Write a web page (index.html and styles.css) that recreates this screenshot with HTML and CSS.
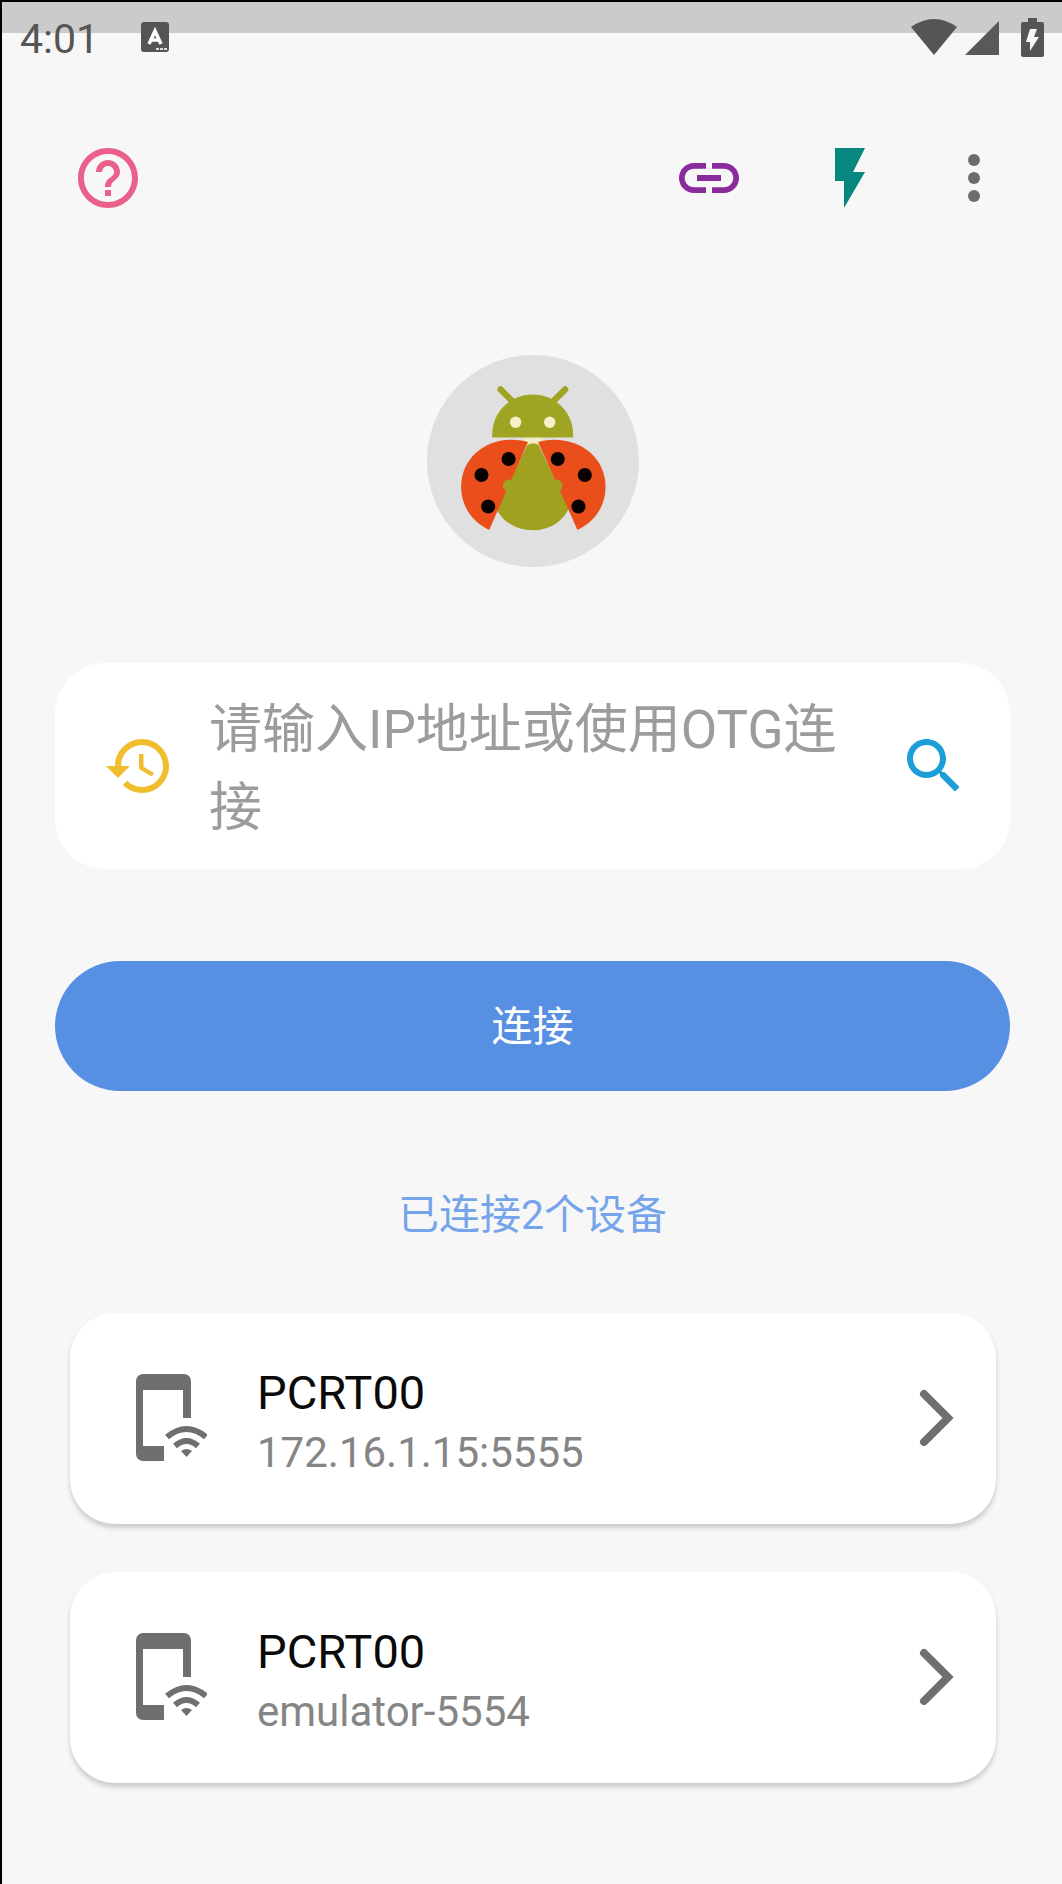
FILE: index.html
```html
<!DOCTYPE html>
<html lang="zh-CN">
<head>
<meta charset="utf-8">
<meta name="viewport" content="width=device-width, initial-scale=1">
<title>已连接2个设备</title>
<link rel="stylesheet" href="styles.css">
</head>
<body>
<svg class="sprite" aria-hidden="true">
  <symbol id="phone-wifi" viewBox="0 0 72 88">
    <path fill="currentColor" d="M29 87H8a7 7 0 0 1-7-7V7a7 7 0 0 1 7-7h41a7 7 0 0 1 7 7v37h-8V16H8v56h21z"/>
    <path fill="none" stroke="currentColor" stroke-width="6" d="M32 63q19.500-16 39 0M40 72q11.500-10 23 0"/>
    <path fill="currentColor" d="M46 77q5.500-4 11 0l-5.500 6z"/>
  </symbol>
  <symbol id="chevron" viewBox="0 0 36 60">
    <path fill="none" stroke="currentColor" stroke-width="8" stroke-linecap="round" d="M6 6l24 24L6 54"/>
  </symbol>
</svg>

<header class="status-bar">
  <time class="clock">4:01</time>
  <svg class="badge" viewBox="0 0 28 30" aria-hidden="true">
    <rect width="28" height="30" rx="3" fill="#555"/>
    <path d="M8 22l6-13 6 13M10.500 18h7" fill="none" stroke="#fff" stroke-width="3.500"/>
    <path d="M15 27h11" stroke="#ddd" stroke-width="2" stroke-dasharray="3 1"/>
  </svg>
  <svg class="wifi" viewBox="0 0 46 36" aria-hidden="true"><path fill="#555" d="M0 8Q23-8 46 8L23 36z"/></svg>
  <svg class="signal" viewBox="0 0 34 34" aria-hidden="true"><path fill="#595959" d="M34 0v34H0z"/></svg>
  <svg class="battery" viewBox="0 0 23 39" aria-hidden="true">
    <path fill="#555" d="M7 0h9v4h5q2 0 2 2v31q0 2-2 2H2q-2 0-2-2V6q0-2 2-2h5z"/>
    <path fill="#f7f7f7" d="M9 11h7l-3 8h5L9 33v-9H5z"/>
  </svg>
</header>

<main class="page">
  <nav class="toolbar">
    <button class="icon-button help" type="button" aria-label="帮助">
      <svg viewBox="0 0 24 24"><path d="M11 18h2v-2h-2v2zm1-16C6.480 2 2 6.480 2 12s4.480 10 10 10 10-4.480 10-10S17.520 2 12 2zm0 18c-4.410 0-8-3.590-8-8s3.590-8 8-8 8 3.590 8 8-3.590 8-8 8zm0-14c-2.210 0-4 1.790-4 4h2c0-1.100.9-2 2-2s2 .9 2 2c0 2-3 1.750-3 5h2c0-2.250 3-2.500 3-5 0-2.210-1.790-4-4-4z"/></svg>
    </button>
    <button class="icon-button link" type="button" aria-label="链接">
      <svg viewBox="0 0 24 24"><path d="M3.900 12c0-1.710 1.390-3.100 3.100-3.100h4V7H7c-2.760 0-5 2.240-5 5s2.240 5 5 5h4v-1.900H7c-1.710 0-3.100-1.390-3.100-3.100zM8 13h8v-2H8v2zm9-6h-4v1.900h4c1.710 0 3.100 1.390 3.100 3.100s-1.390 3.100-3.100 3.100h-4V17h4c2.760 0 5-2.240 5-5s-2.240-5-5-5z"/></svg>
    </button>
    <button class="icon-button flash" type="button" aria-label="快捷">
      <svg viewBox="0 0 24 24"><path d="M7 2v11h3v9l7-12h-4l4-8z"/></svg>
    </button>
    <button class="icon-button more" type="button" aria-label="更多">
      <svg viewBox="0 0 24 24"><circle cx="12" cy="6" r="2"/><circle cx="12" cy="12" r="2"/><circle cx="12" cy="18" r="2"/></svg>
    </button>
  </nav>

  <svg class="logo" viewBox="52 45 634 634" aria-hidden="true">
    <circle cx="369" cy="362" r="317" fill="#e0e0e0"/>
    <path d="M340 290h58l-8 30h-44z" fill="#f1edc4"/>
    <path d="M272 148l36 36M465 148l-36 36" stroke="#9fa522" stroke-width="19" stroke-linecap="round"/>
    <path d="M247 292v-10c0-66 54-119 121-119s121 53 121 119v10z" fill="#9fa522"/>
    <circle cx="317" cy="246" r="17" fill="#f4f0c8"/>
    <circle cx="419" cy="246" r="17" fill="#f4f0c8"/>
    <path d="M352 314q17-8 34 0l90 190c-20 42-60 65-107 65s-90-23-110-65z" fill="#9fa11f"/>
    <path d="M354 305C250 278 154 340 154 440c0 58 34 105 84 128z" fill="#e94e1b"/>
    <path d="M384 305c104-27 202 35 202 135 0 58-34 105-84 128z" fill="#e94e1b"/>
    <circle cx="298" cy="436" r="19" fill="#9fa11f"/>
    <circle cx="438" cy="436" r="19" fill="#9fa11f"/>
    <g fill="#080300">
      <circle cx="296" cy="356" r="21"/><circle cx="215" cy="404" r="21"/><circle cx="235" cy="498" r="21"/>
      <circle cx="443" cy="356" r="21"/><circle cx="524" cy="404" r="21"/><circle cx="505" cy="498" r="21"/>
    </g>
  </svg>

  <form class="connect-form">
    <div class="address">
      <button class="icon-button history" type="button" aria-label="历史">
        <svg viewBox="0 0 24 24"><path d="M13 3c-4.970 0-9 4.030-9 9H1l3.890 3.890.07.14L9 12H6c0-3.870 3.130-7 7-7s7 3.130 7 7-3.130 7-7 7c-1.930 0-3.680-.79-4.940-2.060l-1.420 1.420C8.270 19.990 10.510 21 13 21c4.970 0 9-4.030 9-9s-4.030-9-9-9zm-1 5v5l4.280 2.540.72-1.210-3.500-2.080V8H12z"/></svg>
      </button>
      <textarea class="address-input" rows="2" aria-label="IP地址" placeholder="请输入IP地址或使用OTG连接"></textarea>
      <button class="icon-button search" type="button" aria-label="搜索">
        <svg viewBox="0 0 24 24"><path d="M15.500 14h-.79l-.28-.27C15.410 12.590 16 11.110 16 9.500 16 5.910 13.090 3 9.500 3S3 5.910 3 9.500 5.910 16 9.500 16c1.610 0 3.090-.59 4.230-1.570l.27.28v.79l5 4.990L20.490 19l-4.990-5zm-6 0C7.010 14 5 11.990 5 9.500S7.010 5 9.500 5 14 7.010 14 9.500 11.990 14 9.500 14z"/></svg>
      </button>
    </div>
    <button class="connect" type="button">连接</button>
  </form>

  <p class="summary">已连接2个设备</p>

  <div class="devices">
    <a class="device" href="#device-1">
      <svg class="device-icon" aria-hidden="true"><use href="#phone-wifi"/></svg>
      <span class="device-text">
        <span class="device-name">PCRT00</span>
        <span class="device-address">172.16.1.15:5555</span>
      </span>
      <svg class="device-chevron" aria-hidden="true"><use href="#chevron"/></svg>
    </a>
    <a class="device" href="#device-2">
      <svg class="device-icon" aria-hidden="true"><use href="#phone-wifi"/></svg>
      <span class="device-text">
        <span class="device-name">PCRT00</span>
        <span class="device-address">emulator-5554</span>
      </span>
      <svg class="device-chevron" aria-hidden="true"><use href="#chevron"/></svg>
    </a>
  </div>
</main>
</body>
</html>
```
FILE: styles.css
```css
* {
  box-sizing: border-box;
}

body {
  margin: 0;
  min-height: 100vh;
  border-top: 2px solid #000;
  border-left: 2px solid #000;
  background: #f7f7f7;
  color: #000;
  font-family: Roboto, "Noto Sans CJK SC", sans-serif;
}

button,
textarea {
  padding: 0;
  border: 0;
  background: none;
  font-family: inherit;
}

svg {
  display: block;
  flex: none;
}

.sprite {
  display: none;
}

.status-bar {
  display: flex;
  align-items: center;
  height: 70px;
  padding: 0 18px;
  background: linear-gradient(#cbcbcb 31px, transparent 31px);
}

.clock {
  padding-top: 4px;
  color: #555;
  font-size: 41px;
  line-height: 48px;
}

.badge {
  width: 28px;
  height: 30px;
  margin-left: 42px;
}

.wifi {
  width: 46px;
  height: 36px;
  margin-left: auto;
}

.signal {
  width: 34px;
  height: 34px;
  margin: 2px 22px 0 8px;
}

.battery {
  width: 23px;
  height: 39px;
}

.page {
  display: flex;
  flex-direction: column;
  padding: 70px 52px 100px 53px;
}

.toolbar {
  display: flex;
  padding-left: 17px;
}

.icon-button {
  flex: none;
  width: 72px;
  height: 72px;
  fill: currentColor;
}

.help {
  margin-right: auto;
  color: #e9608a;
}

.link {
  margin-right: 69px;
  color: #8a2b9c;
}

.flash {
  margin-right: 52px;
  color: #07877e;
}

.more {
  color: #6c6c6c;
}

.logo {
  width: 212px;
  height: 212px;
  margin: 141px auto 96px;
}

.connect-form {
  display: flex;
  flex-direction: column;
  gap: 92px;
}

.address {
  display: flex;
  align-items: center;
  gap: 34px;
  padding: 25px 40px 25px 48px;
  border-radius: 50px;
  background: #fff;
}

.history {
  color: #f0be2c;
}

.search {
  color: #1c9fd8;
}

.address-input {
  flex: 1;
  min-width: 0;
  height: 156px;
  padding-top: 3px;
  outline: 0;
  resize: none;
  overflow: hidden;
  font-size: 53px;
  line-height: 78px;
}

.address-input::placeholder {
  color: #9c9c9c;
}

.connect {
  height: 130px;
  padding-bottom: 6px;
  border-radius: 65px;
  background: #578fe3;
  color: #fff;
  font-size: 41px;
}

.summary {
  margin: 94px 0 68px;
  color: #76a4ea;
  font-size: 41px;
  line-height: 60px;
  text-align: center;
}

.devices {
  display: grid;
  gap: 48px;
  padding: 0 14px 0 15px;
}

.device {
  display: flex;
  align-items: center;
  gap: 50px;
  padding: 40px 42px 41px 65px;
  border-radius: 45px;
  background: #fff;
  box-shadow: 0 4px 5px rgba(0, 0, 0, 0.18);
  color: #6f6f6f;
  text-decoration: none;
}

.device-icon {
  width: 72px;
  height: 88px;
}

.device-text {
  display: flex;
  flex: 1;
  flex-direction: column;
  padding-top: 10px;
}

.device-name {
  color: #0a0a0a;
  font-size: 47px;
  line-height: 60px;
}

.device-address {
  color: #858585;
  font-size: 42px;
  line-height: 60px;
}

.device-chevron {
  width: 36px;
  height: 60px;
}
```
